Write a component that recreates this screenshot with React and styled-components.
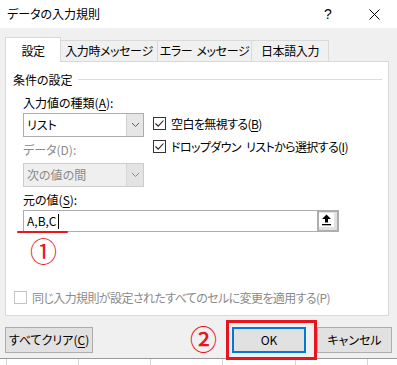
import React from "react";
import styled, { createGlobalStyle } from "styled-components";

const Global = createGlobalStyle`
  html, body { margin: 0; padding: 0; background: #ffffff; }
  body {
    font-family: "Noto Sans CJK JP", "Noto Sans", sans-serif;
    font-size: 12px;
    color: #000;
    font-feature-settings: "palt";
  }
  #root { width: 397px; height: 365px; overflow: hidden; position: relative; }
`;

const Dialog = styled.div`
  width: 397px;
  height: 359px;
  box-sizing: border-box;
  background: #f0f0f0;
  border-bottom: 1px solid #9a9a9a;
  display: flex;
  flex-direction: column;
  position: relative;
`;

const TitleBar = styled.div`
  height: 28px;
  background: #ffffff;
  display: flex;
  align-items: center;
  padding-left: 7px;
`;

const TitleText = styled.div`
  line-height: 16px;
  flex: 1;
`;

const TitleButton = styled.div`
  width: 46px;
  height: 28px;
  display: flex;
  align-items: center;
  justify-content: center;
  font-family: "Liberation Sans", sans-serif;
  font-size: 14px;
`;

const TabRow = styled.div`
  margin-top: 9px;
  height: 24px;
  padding-left: 5px;
  display: flex;
  align-items: flex-end;
  position: relative;
  z-index: 1;
`;

const Tab = styled.div`
  box-sizing: border-box;
  width: ${(p) => p.$w}px;
  height: ${(p) => (p.$active ? 25 : 21)}px;
  margin-bottom: ${(p) => (p.$active ? -1 : 0)}px;
  margin-left: ${(p) => (p.$first ? 0 : -1)}px;
  border: 1px solid #d9d9d9;
  border-bottom: none;
  background: ${(p) => (p.$active ? "#ffffff" : "#f0f0f0")};
  display: flex;
  align-items: center;
  justify-content: center;
  line-height: 16px;
  letter-spacing: -0.4px;
  word-spacing: 2px;
  padding-top: ${(p) => (p.$active ? 1 : 0)}px;
  position: relative;
  z-index: ${(p) => (p.$active ? 2 : 1)};
  white-space: pre;
`;

const Panel = styled.div`
  margin-left: 5px;
  width: 384px;
  height: 255px;
  box-sizing: border-box;
  border: 1px solid #d9d9d9;
  background: #ffffff;
  display: flex;
  flex-direction: column;
`;

const GroupHeader = styled.div`
  margin-top: 10px;
  padding: 0 6px 0 7px;
  display: flex;
  align-items: center;
  height: 16px;
`;

const GroupTitle = styled.div`
  line-height: 16px;
`;

const GroupLine = styled.div`
  flex: 1;
  height: 1px;
  margin-left: 5px;
  margin-top: -1px;
  background: #dcdcdc;
`;

const Fields = styled.div`
  padding-left: 17px;
  display: flex;
  flex-direction: column;
`;

const Label = styled.div`
  line-height: 16px;
  margin-top: ${(p) => p.$mt || 0}px;
  color: ${(p) => (p.$disabled ? "#8a8a8a" : "#000")};
  white-space: nowrap;
`;

const Ul = styled.span`
  text-decoration: underline;
  text-underline-offset: 2px;
`;

const TypeRow = styled.div`
  display: flex;
  gap: 9px;
`;

const LeftCol = styled.div`
  width: 121px;
  display: flex;
  flex-direction: column;
`;

const RightCol = styled.div`
  display: flex;
  flex-direction: column;
  gap: 10px;
  padding-top: 6px;
`;

const Select = styled.div`
  margin-top: ${(p) => p.$mt || 0}px;
  width: 121px;
  height: 24px;
  box-sizing: border-box;
  border: 1px solid ${(p) => (p.$disabled ? "#cccccc" : "#adadad")};
  background: ${(p) => (p.$disabled ? "#efefef" : "#ffffff")};
  display: flex;
  color: ${(p) => (p.$disabled ? "#8a8a8a" : "#000")};
`;

const SelectText = styled.div`
  flex: 1;
  padding-left: 3px;
  line-height: 22px;
`;

const SelectArrow = styled.div`
  width: 16px;
  background: ${(p) => (p.$disabled ? "#e3e3e3" : "#e6e6e6")};
  border-left: 1px solid ${(p) => (p.$disabled ? "#d6d6d6" : "#cfcfcf")};
  display: flex;
  align-items: center;
  justify-content: center;
`;

const CheckRow = styled.div`
  display: flex;
  align-items: center;
  gap: 5px;
  height: 13px;
  white-space: pre;
  color: ${(p) => (p.$disabled ? "#8a8a8a" : "#000")};
`;

const CheckLabel = styled.span`
  letter-spacing: -0.6px;
  word-spacing: 3px;
`;

const Box = styled.div`
  width: 13px;
  height: 13px;
  box-sizing: border-box;
  border: 1px solid ${(p) => (p.$disabled ? "#c4c4c4" : "#333333")};
  background: #fff;
  display: flex;
  align-items: center;
  justify-content: center;
  flex: none;
`;

const InputRow = styled.div`
  margin-top: 2px;
  display: flex;
  height: 22px;
`;

const Input = styled.div`
  width: 294px;
  box-sizing: border-box;
  border: 1px solid #adadad;
  border-right: none;
  line-height: 20px;
  padding-left: 3px;
  display: flex;
  align-items: center;
`;

const Caret = styled.span`
  display: inline-block;
  width: 1px;
  height: 15px;
  background: #000;
  margin-left: 1px;
`;

const RefButton = styled.div`
  width: 22px;
  box-sizing: border-box;
  border: 2px solid #adadad;
  background: #e1e1e1;
  display: flex;
  align-items: flex-start;
  justify-content: flex-start;
  padding: 1px 0 0 0;
`;

const RefInner = styled.div`
  width: 15px;
  height: 14px;
  background: #ffffff;
  display: flex;
  align-items: center;
  justify-content: center;
`;

const ApplyRow = styled.div`
  margin-top: auto;
  margin-bottom: 11px;
  padding-left: 8px;
`;

const Footer = styled.div`
  margin-top: 11px;
  padding: 0 5px 0 5px;
  display: flex;
  align-items: flex-start;
`;

const Button = styled.div`
  box-sizing: border-box;
  width: ${(p) => p.$w}px;
  height: 26px;
  border: ${(p) => (p.$primary ? "2px solid #0078d7" : "1px solid #adadad")};
  background: #e1e1e1;
  display: flex;
  align-items: center;
  justify-content: center;
  line-height: 16px;
  margin-left: ${(p) => p.$ml || "0"};
  white-space: nowrap;
`;

const GridStrip = styled.div`
  height: 6px;
  display: flex;
  background: #ffffff;
`;

const GridCell = styled.div`
  width: ${(p) => p.$w}px;
  flex: none;
  box-sizing: border-box;
  border-right: 1px solid #d4d4d4;
`;

const RedLine = styled.div`
  position: absolute;
  left: 17px;
  top: 231px;
  width: 51px;
  height: 2px;
  border-radius: 1px;
  background: #e8141e;
`;

const Marker = styled.div`
  position: absolute;
  left: ${(p) => p.$x}px;
  top: ${(p) => p.$y}px;
  font-family: "Noto Sans CJK JP", sans-serif;
  font-size: ${(p) => p.$size}px;
  line-height: 1;
  color: #e8141e;
  font-weight: ${(p) => p.$weight || 400};
`;

const RedRect = styled.div`
  position: absolute;
  left: 226px;
  top: 320px;
  width: 91px;
  height: 40px;
  box-sizing: border-box;
  border: 3px solid #e8141e;
`;

const Check = () => (
  <svg width="11" height="11" viewBox="0 0 11 11">
    <path d="M1.5 5.5 L4.2 8.2 L9.5 2.5" fill="none" stroke="#222" strokeWidth="1.1" />
  </svg>
);

const Chevron = ({ color }) => (
  <svg width="9" height="6" viewBox="0 0 9 6">
    <path d="M1 1 L4.5 4.5 L8 1" fill="none" stroke={color} strokeWidth="1" />
  </svg>
);

const UploadIcon = () => (
  <svg width="11" height="12" viewBox="0 0 11 12">
    <path d="M5.5 0.5 L10 5 L7 5 L7 8.5 L4 8.5 L4 5 L1 5 Z" fill="#000" />
    <rect x="1" y="10" width="9" height="1.3" fill="#000" />
  </svg>
);

const CloseIcon = () => (
  <svg width="11" height="11" viewBox="0 0 11 11">
    <path d="M0.5 0.5 L10.5 10.5 M10.5 0.5 L0.5 10.5" stroke="#000" strokeWidth="1" fill="none" />
  </svg>
);

export default function App() {
  return (
    <>
      <Global />
      <Dialog>
        <TitleBar>
          <TitleText>データの入力規則</TitleText>
          <TitleButton>?</TitleButton>
          <TitleButton>
            <CloseIcon />
          </TitleButton>
        </TitleBar>

        <TabRow>
          <Tab $w={56} $active $first>設定</Tab>
          <Tab $w={98}>入力時メッセージ</Tab>
          <Tab $w={95}>エラー メッセージ</Tab>
          <Tab $w={78}>日本語入力</Tab>
        </TabRow>

        <Panel>
          <GroupHeader>
            <GroupTitle>条件の設定</GroupTitle>
            <GroupLine />
          </GroupHeader>
          <Fields>
            <Label $mt={7}>
              入力値の種類(<Ul>A</Ul>):
            </Label>
            <TypeRow>
              <LeftCol>
                <Select $mt={2}>
                  <SelectText>リスト</SelectText>
                  <SelectArrow>
                    <Chevron color="#606060" />
                  </SelectArrow>
                </Select>
                <Label $mt={5} $disabled>
                  データ(D):
                </Label>
                <Select $mt={5} $disabled>
                  <SelectText>次の値の間</SelectText>
                  <SelectArrow $disabled>
                    <Chevron color="#8a8a8a" />
                  </SelectArrow>
                </Select>
              </LeftCol>
              <RightCol>
                <CheckRow>
                  <Box>
                    <Check />
                  </Box>
                  <CheckLabel>
                    空白を無視する(<Ul>B</Ul>)
                  </CheckLabel>
                </CheckRow>
                <CheckRow>
                  <Box>
                    <Check />
                  </Box>
                  <CheckLabel>
                    {"ドロップダウン リストから選択する("}
                    <Ul>I</Ul>)
                  </CheckLabel>
                </CheckRow>
              </RightCol>
            </TypeRow>
            <Label $mt={5}>
              元の値(<Ul>S</Ul>):
            </Label>
            <InputRow>
              <Input>
                A,B,C
                <Caret />
              </Input>
              <RefButton>
                <RefInner>
                  <UploadIcon />
                </RefInner>
              </RefButton>
            </InputRow>
          </Fields>
          <ApplyRow>
            <CheckRow $disabled>
              <Box $disabled />
              <CheckLabel>同じ入力規則が設定されたすべてのセルに変更を適用する(P)</CheckLabel>
            </CheckRow>
          </ApplyRow>
        </Panel>

        <Footer>
          <Button $w={88}>
            すべてクリア(<Ul>C</Ul>)
          </Button>
          <Button $w={74} $primary $ml="auto">
            OK
          </Button>
          <Button $w={75} $ml="11px">
            キャンセル
          </Button>
        </Footer>

        <RedLine />
        <Marker $x={30} $y={237} $size={27}>
          ①
        </Marker>
        <Marker $x={190} $y={325} $size={27} $weight={500}>
          ②
        </Marker>
        <RedRect />
      </Dialog>
      <GridStrip>
        <GridCell $w={7} />
        <GridCell $w={72} />
        <GridCell $w={72} />
        <GridCell $w={72} />
        <GridCell $w={73} />
        <GridCell $w={72} />
      </GridStrip>
    </>
  );
}
